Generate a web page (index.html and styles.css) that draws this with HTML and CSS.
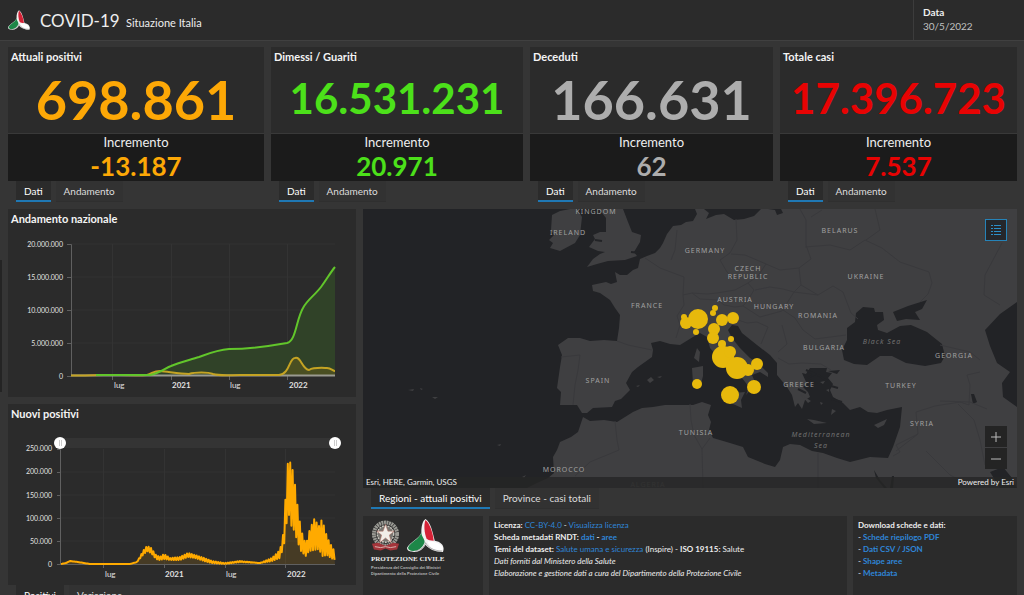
FILE: index.html
```html
<!DOCTYPE html>
<html lang="it">
<head>
<meta charset="utf-8">
<title>COVID-19 Situazione Italia</title>
<link rel="stylesheet" href="styles.css">
</head>
<body>
<svg class="defs" aria-hidden="true">
  <symbol id="pc-logo" viewBox="0 0 36 32">
    <path d="M18 0C15 2 14 7 14 13C12 19 3 22 0 28C0 31 3 32 7 32C12 32 16 29 18 25C21 29 27 32 35 32C37 27 34 22 27 21C25 13 23 3 18 0Z" fill="#f2f2f2"/>
    <path d="M18 1C22 4 25 13 26 21C23 21 21 21 19 19C17 14 16 6 18 1Z" fill="#d52236"/>
    <path d="M14 13C14 17 18 20 17 23C15 28 11 31 6 31C3 31 1 30 1 28C3 22 12 20 14 13Z" fill="#1d8748"/>
    <path d="M20 22C25 21 32 23 35 28C35 30 34 31 33 31C26 31 22 27 20 22Z" fill="#fff"/>
    <path d="M8 31C14 30 17 27 18 23C21 28 26 31 34 31" fill="none" stroke="#888" stroke-width=".6"/>
  </symbol>
</svg>
<header class="topbar">
  <svg class="topbar-logo" aria-hidden="true"><use href="#pc-logo"/></svg>
  <h1 class="topbar-title">COVID-19 <small>Situazione Italia</small></h1>
  <div class="topbar-date"><b>Data</b><span>30/5/2022</span></div>
</header>
<main class="dashboard">
  <div class="cards">
    <section class="card-wrap orange">
      <div class="card"><h2 class="title">Attuali positivi</h2><p class="total large">698.861</p>
        <div class="delta"><span>Incremento</span><strong>-13.187</strong></div></div>
      <nav class="tabs"><button class="tab active">Dati</button><button class="tab">Andamento</button></nav>
    </section>
    <section class="card-wrap green">
      <div class="card"><h2 class="title">Dimessi / Guariti</h2><p class="total">16.531.231</p>
        <div class="delta"><span>Incremento</span><strong>20.971</strong></div></div>
      <nav class="tabs"><button class="tab active">Dati</button><button class="tab">Andamento</button></nav>
    </section>
    <section class="card-wrap gray">
      <div class="card"><h2 class="title">Deceduti</h2><p class="total large">166.631</p>
        <div class="delta"><span>Incremento</span><strong>62</strong></div></div>
      <nav class="tabs"><button class="tab active">Dati</button><button class="tab">Andamento</button></nav>
    </section>
    <section class="card-wrap red">
      <div class="card"><h2 class="title">Totale casi</h2><p class="total">17.396.723</p>
        <div class="delta"><span>Incremento</span><strong>7.537</strong></div></div>
      <nav class="tabs"><button class="tab active">Dati</button><button class="tab">Andamento</button></nav>
    </section>
  </div>
  <div class="lower">
    <div class="charts">
      <section class="panel">
        <h2 class="title">Andamento nazionale</h2>
        <svg class="chart" viewBox="8 228 348 169">
          <path class="grid" d="M71 244H335M71 277H335M71 310H335M71 343H335M112.500 244V376M171.500 244V376M229.500 244V376M287.500 244V376"/>
          <path class="axis" d="M67 244.500H71.500V376M67 277.500H71M67 310.500H71M67 343.500H71M67 376.500H71M112.500 376V380M171.500 376V380M229.500 376V380M287.500 376V380"/>
          <path class="area-green" d="M71 376L150 375C160 373 165 368 171 366C180 362 190 360 199 357C210 353 217 350 229 349C250 349 270 346 287 343C296 341 296 320 303 308C307 300 315 295 321 287C327 279 330 273 335 267V376Z"/>
          <path class="area-orange" d="M280 375C290 373 290 358 295 358C301 356 302 370 309 370C314 367 324 368 327 368C331 368 333 371 335 371V376H280Z"/>
          <path class="axis-base" d="M71 375.500H335"/>
          <path class="line-orange" d="M71 375.500H85C100 374 135 376 147 375C153 373 154 371 160 371C170 372 180 374 189 374C195 372 208 372 213 374C219 376 230 375 240 375H279C290 374 289 358 295 358C301 356 302 369 309 370C314 367 324 368 327 368C331 368 333 371 335 371"/>
          <path class="line-green" d="M96 375H150C160 373 165 368 171 366C180 362 190 360 199 357C210 353 217 350 229 349C250 349 270 346 287 343C296 341 296 320 303 308C307 300 315 295 321 287C327 279 330 273 335 267"/>
          <g class="ylabels"><text x="63" y="247">20.000.000</text><text x="63" y="280">15.000.000</text><text x="63" y="313">10.000.000</text><text x="63" y="346">5.000.000</text><text x="63" y="379">0</text></g>
          <g class="xlabels"><text x="114" y="388">lug</text><text class="year" x="172" y="388">2021</text><text x="230" y="388">lug</text><text class="year" x="289" y="388">2022</text></g>
        </svg>
      </section>
      <section class="panel-wrap">
        <div class="panel">
          <h2 class="title">Nuovi positivi</h2>
          <div class="range">
            <input type="range" aria-label="Data iniziale" min="0" max="100" value="0">
            <input type="range" aria-label="Data finale" min="0" max="100" value="100">
          </div>
          <svg class="chart" viewBox="8 449 348 136">
            <path class="grid" d="M61 472H335M61 495H335M61 518H335M61 541H335M103.500 449V564M164.500 449V564M225.500 449V564M285.500 449V564"/>
            <path class="axis" d="M57 449.500H60.500V564M57 472.500H60M57 495.500H60M57 518.500H60M57 541.500H60M57 564.500H335M103.500 564V568M164.500 564V568M225.500 564V568M285.500 564V568"/>
            <path id="daily-area" class="area-orange"/>
            <path id="daily-line" class="line-daily"/>
            <g class="ylabels"><text x="52" y="451">250.000</text><text x="52" y="474">200.000</text><text x="52" y="498">150.000</text><text x="52" y="521">100.000</text><text x="52" y="544">50.000</text><text x="52" y="567">0</text></g>
            <g class="xlabels"><text x="105" y="577">lug</text><text class="year" x="165" y="577">2021</text><text x="226" y="577">lug</text><text class="year" x="287" y="577">2022</text></g>
          </svg>
        </div>
        <nav class="tabs"><button class="tab active">Positivi</button><button class="tab">Variazione</button></nav>
      </section>
    </div>
    <div class="side">
      <section class="map">
        <svg class="map-art" viewBox="363 209 654 279" preserveAspectRatio="xMidYMid slice">
          <g class="land">
            <path d="M695 209L697 214 693 221 686 222 681 225 673 226 667 234 663 243 660 248 655 253 647 256 640 259 638 268 633 270 627 275 620 275 615 272 617 282 611 284 606 282 592 285 593 291 600 293 610 300 615 308 620 315 619 328 617 341 604 340 590 341 580 338 568 338 558 345 562 355 560 367 557 388 561 392 560 405 577 405 582 413 587 413 593 408 612 407 615 401 621 399 630 390 626 383 632 372 638 367 652 357 653 350 651 343 660 341 670 344 680 345 693 337 700 333 707 337 710 348 716 355 720 362 732 370 742 378 749 387 746 395 752 388 755 382 752 375 760 372 768 377 768 373 760 365 750 358 740 348 732 338 728 330 732 325 738 326 742 333 757 345 770 355 777 363 777 375 787 387 792 395 795 407 798 403 802 409 805 400 810 397 808 392 803 387 807 384 802 373 806 374 810 368 827 368 826 372 832 373 828 378 833 384 830 390 833 397 843 403 850 410 860 407 868 412 877 413 887 410 902 407 900 427 893 447 888 458 870 457 850 462 837 458 823 453 812 451 800 445 790 444 783 447 780 460 775 467 765 464 748 457 743 447 730 443 713 438 709 430 711 422 708 415 711 405 702 402 693 405 680 405 665 405 653 407 642 408 633 412 617 422 604 420 590 421 583 417 578 432 571 437 560 442 557 450 553 457 554 473 548 478 537 483 527 488H1017V209Z"/>
            <path d="M552 215L560 211 570 209H577L582 217 580 235 575 243 560 251 550 248 553 243 549 240 554 235 551 230Z"/>
            <path d="M599 209H623L628 222 632 232 641 235 640 242 634 252 637 256 625 260 608 261 597 264 587 267 593 259 600 254 605 252 598 251 589 247 595 239 593 235 600 232 606 232 606 218Z"/>
            <path d="M697 348L700 352 699 362 694 358ZM692 368L703 366 703 376 701 384 696 388 693 384ZM722 395L733 393 745 392 741 400 742 408 733 404ZM807 419L814 420 827 423 814 424ZM874 425L887 419 884 425 878 428ZM647 380L651 377 654 380 650 383ZM657 377L662 376 660 378ZM636 386L640 385 638 387ZM800 394L811 401 808 403ZM820 382L825 381 823 384ZM826 390L829 389 829 392ZM832 409L836 411 831 415ZM820 402L823 403 821 405ZM408 390L414 389 413 391ZM420 388L423 389 421 390ZM432 397L438 397 435 399ZM497 445L501 444 500 446ZM522 477L526 475 524 478Z"/>
          </g>
          <g class="water">
            <path d="M704 209L709 213 706 219 716 215 724 214 734 220 744 219 754 216 761 209ZM768 209L775 210 777 215 783 213 781 209Z"/>
            <path d="M847 328L855 322 856 313 863 307 874 308 875 312 883 312 884 320 877 325 878 330 887 333 900 326 911 325 927 332 942 344 945 356 941 363 925 366 906 363 892 356 880 356 867 365 854 364 844 360 842 350 847 340Z"/>
            <path d="M893 312L908 306 927 300 922 309 915 312 920 320 906 319 897 321Z"/>
            <path d="M1017 302L1000 314 985 330 990 346 997 363 1010 372 1002 383 1003 397 1017 407Z"/>
            <path d="M971 394L974 394 977 402 973 404ZM990 472L1003 467 1012 478 1017 488H1000ZM874 470L880 480 887 488H884L876 478ZM892 476L890 488H893L894 476ZM828 371L840 370 837 374Z"/>
          </g>
          <path class="coast-cut" d="M806 370L815 374 808 378M810 380L817 384M798 389L806 393M818 375L827 381M831 386L838 388M832 399L842 402M640 253L631 252M595 240L602 241"/>
          <path class="borders" d="M617 341L628 345 652 350M676 338L680 325 677 316 684 305 683 295 692 293 707 294 717 293 735 290M677 230L675 250 671 260M645 258L660 268 684 277 683 295M692 293L700 299 718 300 724 305 735 307 743 306 748 300 754 290 748 283 735 290M736 219L737 240 730 253 720 260 727 272 735 280M731 254L745 255 766 264 780 270 799 268M766 264L758 276 748 283M799 268L811 259 806 245 806 220 800 209M805 247L830 245 850 250 865 240 882 248 900 262 929 272 932 283 928 294 920 302M811 217L822 210M799 268L801 285 794 292 783 289 770 287 755 290M794 292L818 295 833 286 843 292 851 313 858 319M801 285L818 295M783 310L795 318 803 330 815 339 846 335M743 306L760 317 782 311 794 292M738 320L747 323 757 322 768 327 761 344M782 325L787 344 778 352M778 358L789 364 802 363 821 364 831 370M561 357L580 355 578 370 575 385 573 405M615 421L617 440 619 450 590 462 575 476M690 404L691 420 694 435 702 449 703 488M710 438L702 449M818 453V488M893 456L900 452 896 445 918 434 916 412 935 406 960 402 969 405 970 385 967 375 980 372M918 434L896 451M926 451L950 475 975 488M958 404L974 420 980 440 985 465M940 345L970 352 980 360M1002 243L985 275 984 295 1000 305M940 401L970 402 987 409M875 209L880 230 866 240"/>
          <g class="circles">
            <circle cx="698" cy="319" r="10"/><circle cx="686" cy="323" r="6"/><circle cx="684" cy="317" r="3"/><circle cx="696" cy="332" r="3"/><circle cx="715" cy="308" r="3"/><circle cx="713" cy="313" r="3"/><circle cx="722" cy="320" r="6"/><circle cx="733" cy="318" r="6"/><circle cx="714" cy="329" r="6"/><circle cx="713" cy="338" r="6"/><circle cx="731" cy="339" r="3"/><circle cx="722" cy="344" r="4"/><circle cx="723" cy="357" r="11"/><circle cx="730" cy="352" r="6"/><circle cx="737" cy="368" r="11"/><circle cx="748" cy="370" r="6"/><circle cx="757" cy="364" r="6"/><circle cx="697" cy="384" r="5"/><circle cx="730" cy="395" r="9"/><circle cx="754" cy="387" r="7"/>
          </g>
          <g class="places">
            <text x="596" y="214">KINGDOM</text><text x="568" y="235">IRELAND</text><text x="705" y="253">GERMANY</text><text x="840" y="233">BELARUS</text><text x="748" y="271">CZECH</text><text x="748" y="279">REPUBLIC</text><text x="866" y="279">UKRAINE</text><text x="647" y="308">FRANCE</text><text x="735" y="302">AUSTRIA</text><text x="774" y="309">HUNGARY</text><text x="818" y="318">ROMANIA</text><text x="824" y="350">BULGARIA</text><text x="954" y="358">GEORGIA</text><text x="598" y="383">SPAIN</text><text x="799" y="387">GREECE</text><text x="901" y="388">TURKEY</text><text x="922" y="426">SYRIA</text><text x="696" y="435">TUNISIA</text><text x="564" y="472">MOROCCO</text><text class="dim" x="648" y="487">ALGERIA</text>
            <text class="sea" x="882" y="344">Black Sea</text><text class="sea" x="821" y="437">Mediterranean</text><text class="sea" x="821" y="448">Sea</text>
          </g>
        </svg>
        <button class="legend-btn" aria-label="Legenda"><svg viewBox="0 0 12 12"><path d="M1 1.500H3M1 4.500H3M1 7.500H3M1 10.500H3M4 1.500H11M4 4.500H11M4 7.500H11M4 10.500H11"/></svg></button>
        <div class="zoom"><button aria-label="Ingrandisci"><svg viewBox="0 0 12 12"><path d="M1 6H11M6 1V11"/></svg></button><button aria-label="Riduci"><svg viewBox="0 0 12 12"><path d="M1 6H11"/></svg></button></div>
        <div class="attribution"><span>Esri, HERE, Garmin, USGS</span><span>Powered by Esri</span></div>
      </section>
      <nav class="tabs"><button class="tab active">Regioni - attuali positivi</button><button class="tab">Province - casi totali</button></nav>
      <footer class="info">
        <section class="panel brand">
          <div class="brand-marks">
            <svg class="emblem" viewBox="0 0 30 32" aria-hidden="true">
              <circle cx="15" cy="14" r="12" fill="none" stroke="#9a9a94" stroke-width="4" stroke-dasharray="2 .6"/>
              <circle cx="15" cy="14" r="8.500" fill="#777570" stroke="#c8c6be" stroke-width="1.500" stroke-dasharray="2 1"/>
              <path d="M15 4L17.500 11H24L19 15 21 23 15 18 9 23 11 15 6 11H12.500Z" fill="#f1eee8" stroke="#b96b5e" stroke-width=".5"/>
              <path d="M1 24L7 23 15 26 23 23 29 24 27 30 20 31 15 29 10 31 3 30Z" fill="#a4353b"/>
              <path d="M4 27L10 28 15 27 20 28 26 27" fill="none" stroke="#d9b4b0"/>
            </svg>
            <svg class="brand-logo" aria-hidden="true"><use href="#pc-logo"/></svg>
          </div>
          <p class="brand-name">PROTEZIONE CIVILE</p>
          <p class="brand-sub">Presidenza del Consiglio dei Ministri<br>Dipartimento della Protezione Civile</p>
        </section>
        <section class="panel notes">
          <p><b>Licenza:</b> <a href="#licenza">CC-BY-4.0</a> - <a href="#licenza">Visualizza licenza</a></p>
          <p><b>Scheda metadati RNDT:</b> <b><a href="#dati">dati</a> - <a href="#aree">aree</a></b></p>
          <p><b>Temi del dataset:</b> <a href="#salute">Salute umana e sicurezza</a> (Inspire) - <b>ISO 19115:</b> Salute</p>
          <p><i>Dati forniti dal Ministero della Salute</i></p>
          <p><i>Elaborazione e gestione dati a cura del Dipartimento della Protezione Civile</i></p>
        </section>
        <section class="panel notes downloads">
          <p><b>Download schede e dati:</b></p>
          <p>- <a href="#pdf">Schede riepilogo PDF</a></p>
          <p>- <a href="#csv">Dati CSV / JSON</a></p>
          <p>- <a href="#shape">Shape aree</a></p>
          <p>- <a href="#metadata">Metadata</a></p>
        </section>
      </footer>
    </div>
  </div>
</main>
<script src="chart.js"></script>
</body>
</html>
```
FILE: styles.css
```css
* { box-sizing: border-box; }
body {
  margin: 0; height: 100vh; overflow: hidden;
  display: flex; flex-direction: column;
  background: #353535; color: #eee;
  font-family: Lato, "Open Sans", sans-serif; font-size: 10px;
}
h1, h2, p { margin: 0; }
button { font: inherit; color: inherit; border: 0; padding: 0; background: none; }
a { color: #2f86d8; text-decoration: none; }
.defs { display: none; }

.topbar { flex: none; height: 41px; display: flex; align-items: center; padding-left: 8px; background: #2b2b2b; border-bottom: 1px solid #404040; }
.topbar-logo { width: 22px; height: 20px; }
.topbar-title { flex: 1; margin-left: 10px; font-size: 17px; font-weight: 400; }
.topbar-title small { font-size: 11px; margin-left: 2px; }
.topbar-date { width: 111px; height: 100%; padding: 5px 0 0 9px; border-left: 1px solid #3c3c3c; display: flex; flex-direction: column; line-height: 14px; color: #c0c0c0; }
.topbar-date b { color: #eee; }

.dashboard { flex: 1; min-height: 0; display: flex; flex-direction: column; gap: 7px; padding: 6px 7px 0 8px; }
.dashboard::before { content: ""; position: absolute; left: 0; top: 260px; width: 2px; height: 132px; background: #242424; }
.cards { display: grid; grid-template-columns: 256fr 252fr 243fr 237fr; gap: 7px; }
.card, .panel { background: #2b2b2b; }
.card { display: flex; flex-direction: column; }
.title { padding: 2px 3px 0; font-size: 11px; line-height: 15px; font-weight: 700; color: #f4f4f4; }
.total { height: 69px; line-height: 69px; text-align: center; font-size: 42px; font-weight: 700; }
.large { font-size: 54px; line-height: 72px; }
.delta { height: 48px; display: flex; flex-direction: column; align-items: center; background: #1b1b1b; border-top: 1px solid #393939; }
.delta span { font-size: 13px; line-height: 16px; }
.delta strong { font-size: 26px; font-weight: 700; line-height: 32px; }
.orange .total, .orange strong { color: #fda806; }
.green .total, .green strong { color: #4ce01a; }
.gray .total, .gray strong { color: #adadad; }
.red .total, .red strong { color: #e80303; }

.tabs { height: 21px; display: flex; gap: 5px; padding-left: 8px; }
.tab { padding: 0 8px; background: #323232; border-bottom: 1px solid #2f2f2f; color: #ddd; white-space: nowrap; }
.tab.active { background: #2b2b2b; border-bottom: 2px solid #1f78b4; color: #fff; }

.lower { flex: 1; min-height: 0; display: grid; grid-template-columns: 348fr 654fr; gap: 7px; }
.charts { display: flex; flex-direction: column; gap: 7px; min-height: 0; }
.chart { display: block; width: 100%; overflow: visible; }
.charts .title { padding-bottom: 2px; }
.grid { fill: none; stroke: #333; }
.axis { fill: none; stroke: #606060; }
.axis-base { fill: none; stroke: #9a9a90; stroke-width: 2; }
.area-green { fill: #304228; }
.area-orange { fill: #ffaa00; fill-opacity: .13; }
.line-green, .line-orange { fill: none; stroke: #62c62b; stroke-width: 2; }
.line-orange { stroke: #c4a323; }
.line-daily { fill: none; stroke: #ffaa00; stroke-width: 2; stroke-linejoin: round; }
.ylabels, .xlabels { fill: #e2e2e2; font-size: 7px; }
.ylabels { text-anchor: end; }
.xlabels { font-size: 8px; }
.year { font-weight: 700; }

.range { display: grid; margin: 14px 15px 0 46px; height: 12px; background: linear-gradient(#343434, #343434) center / calc(100% - 12px) 10px no-repeat; }
.range input { grid-area: 1 / 1; width: 100%; height: 12px; margin: 0; appearance: none; background: none; pointer-events: none; }
.range input::-webkit-slider-thumb { appearance: none; pointer-events: auto; width: 12px; height: 12px; border-radius: 50%; background: linear-gradient(90deg, #ccc 1px, transparent 1px 2px, #ccc 2px) center / 3px 6px no-repeat #fff; }

.side { display: flex; flex-direction: column; min-height: 0; }
.map { flex: 1; min-height: 0; position: relative; overflow: hidden; background: #222326; }
.map-art { display: block; width: 100%; height: 100%; }
.land { fill: #3f3f41; }
.water { fill: #222326; }
.coast-cut { fill: none; stroke: #222326; stroke-width: 2; }
.borders { fill: none; stroke: #39393c; stroke-width: 1; }
.circles { fill: #e7b90c; }
.places { fill: #a0a0a0; font-family: "Noto Sans", sans-serif; font-size: 7px; letter-spacing: 1px; text-anchor: middle; }
.sea { fill: #707070; font-style: italic; }
.dim { fill: #666; }
.legend-btn { position: absolute; top: 10px; right: 10px; width: 22px; height: 22px; background: #25272b; border: 1px solid #2683b8; display: grid; place-items: center; }
.legend-btn svg { width: 12px; height: 12px; stroke: #2c8fc8; }
.zoom { position: absolute; right: 10px; bottom: 19px; display: grid; gap: 1px; }
.zoom button { width: 22px; height: 21px; background: #242424; display: grid; place-items: center; }
.zoom svg { width: 12px; height: 12px; stroke: #bbb; }
.attribution { position: absolute; left: 0; right: 0; bottom: 0; height: 11px; padding: 0 3px; display: flex; justify-content: space-between; background: rgba(38, 38, 38, .8); font-size: 8px; line-height: 11px; }

.side .tabs { flex: none; }
.info { flex: none; height: 79px; margin-top: 7px; display: grid; grid-template-columns: 120fr 358fr 164fr; gap: 6px; }
.brand { padding: 3px 0 0 8px; display: flex; flex-direction: column; }
.brand-marks { display: flex; gap: 7px; align-items: flex-end; }
.emblem { width: 29px; height: 32px; }
.brand-logo { width: 37px; height: 33px; }
.brand-name { margin-top: 3px; font: 700 7px/9px "Liberation Serif", serif; white-space: nowrap; }
.brand-sub { margin-top: 1px; font: 700 4px/6px "Liberation Sans", sans-serif; color: #b5b5b5; white-space: nowrap; }
.notes { padding: 3px 5px; font-size: 8px; line-height: 12px; white-space: nowrap; }
.downloads a { font-weight: 700; }
```
FILE: chart.js
```js
// Envelope of the daily series: [x, weekly minimum, weekly maximum] in chart units.
const envelope = [
  [61, 564, 564], [66, 563, 563], [70, 561, 561], [78, 562, 562], [90, 564, 564],
  [130, 564, 564], [137, 562, 562], [143, 555, 551], [147, 551, 546], [151, 553, 548],
  [156, 559, 555], [160, 560, 557], [164, 559, 554], [170, 560, 558], [180, 560, 557],
  [188, 557, 553], [195, 558, 555], [204, 561, 558], [212, 563, 561], [225, 564, 563],
  [240, 562, 561], [260, 563, 563], [272, 561, 558], [280, 558, 550], [284, 545, 530],
  [287, 520, 465], [289, 515, 462], [291, 525, 463], [294, 530, 476], [297, 540, 502],
  [301, 551, 530], [306, 556, 545], [309, 551, 532], [314, 550, 519], [319, 549, 526],
  [322, 556, 519], [327, 555, 537], [331, 558, 545], [335, 560, 552]
];
function at(x, column) {
  const i = Math.max(1, envelope.findIndex(point => point[0] >= x));
  const a = envelope[i - 1], b = envelope[i];
  return a[column] + (b[column] - a[column]) * (x - a[0]) / (b[0] - a[0]);
}
const points = [];
for (let k = 0; 61 + k * 1.2 <= 335; k++) {
  const x = 61 + k * 1.2;
  points.push(x.toFixed(1) + " " + at(x, k % 2 + 1).toFixed(1));
}
const line = "M" + points.join("L");
document.getElementById("daily-line").setAttribute("d", line);
document.getElementById("daily-area").setAttribute("d", line + "L335 564H61Z");
```
